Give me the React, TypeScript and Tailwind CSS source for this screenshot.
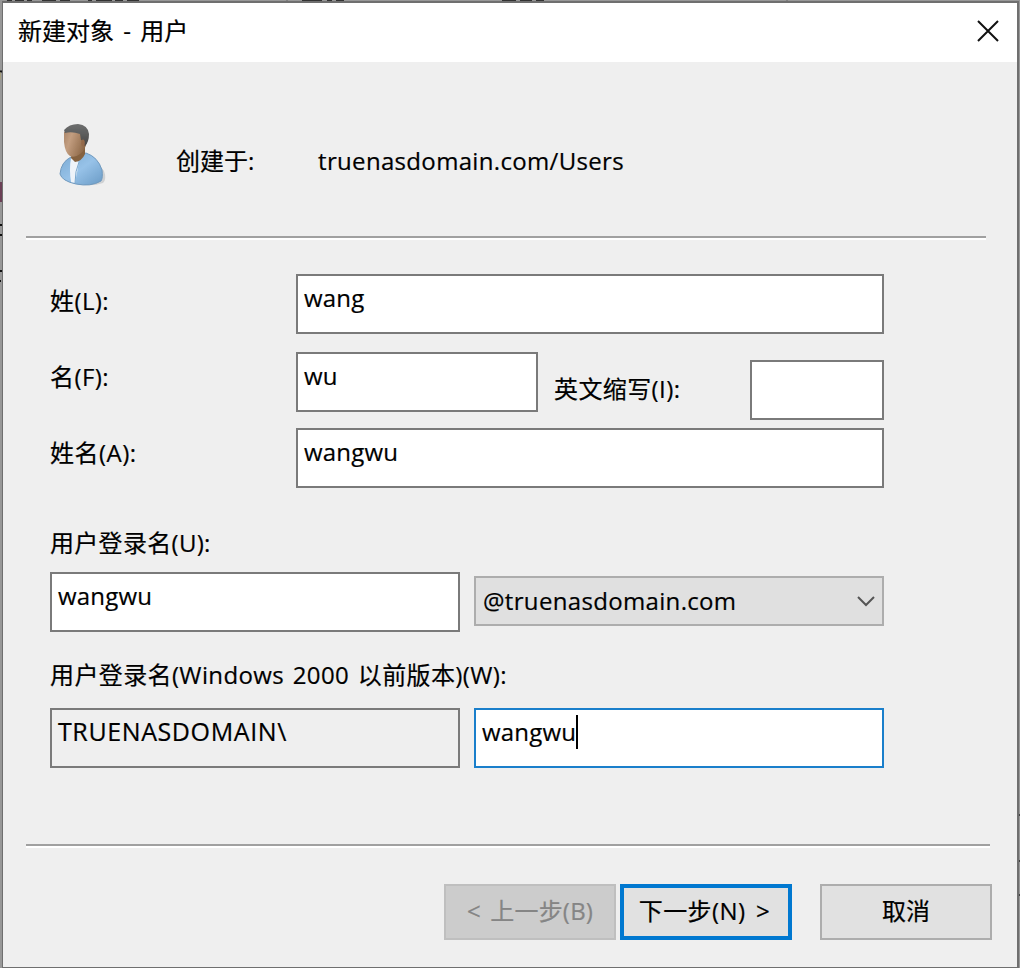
import type { ReactNode } from "react";

const FONT = "font-['Open_Sans','Noto_Sans_CJK_SC',sans-serif]";

function Label({ children, className = "" }: { children: ReactNode; className?: string }) {
  return <span className={`block whitespace-pre text-[24px] leading-[32px] ${className}`}>{children}</span>;
}

function Field({ children, className = "" }: { children?: ReactNode; className?: string }) {
  return (
    <div className={`flex h-[60px] shrink-0 items-start border-2 pl-[6px] pt-[6px] text-[24px] leading-[32px] ${className}`}>
      {children}
    </div>
  );
}

function Divider({ className = "" }: { className?: string }) {
  return <div className={`h-[4px] border-b-2 border-t-2 border-b-white border-t-[#a0a0a0] ${className}`} />;
}

function UserIcon() {
  return (
    <svg width="50" height="68" viewBox="0 0 50 68" className="block">
      <defs>
        <linearGradient id="face" x1="0" y1="0" x2="1" y2="0.4">
          <stop offset="0" stopColor="#a88468" />
          <stop offset="0.35" stopColor="#c39e80" />
          <stop offset="1" stopColor="#8d6848" />
        </linearGradient>
        <linearGradient id="coat" x1="0" y1="0" x2="1" y2="1">
          <stop offset="0" stopColor="#79a9d2" />
          <stop offset="0.5" stopColor="#97c2e8" />
          <stop offset="1" stopColor="#6a9bc6" />
        </linearGradient>
        <linearGradient id="hair" x1="0" y1="0" x2="0" y2="1">
          <stop offset="0" stopColor="#6d6e6e" />
          <stop offset="0.4" stopColor="#5f6060" />
          <stop offset="1" stopColor="#484644" />
        </linearGradient>
        <filter id="soft" x="-20%" y="-20%" width="140%" height="140%">
          <feGaussianBlur stdDeviation="0.7" />
        </filter>
      </defs>
      <g filter="url(#soft)">
        <path d="M9 61Q30 67 44 62Q48 58 45 50L39 42Z" fill="#cfd1d3" />
        <path d="M1 53Q2 41 12 36L27 32Q39 36 43 49Q44 57 42 60Q32 66 17 63Q3 60 1 53Z" fill="url(#coat)" stroke="#6f99be" strokeWidth="1" />
        <path d="M12 37L20 41L16 62L12 61Q10 48 12 37Z" fill="#eef3f9" />
        <path d="M20 41Q16 50 16 62" fill="none" stroke="#7aa8cf" strokeWidth="1" />
        <path d="M13 31L26 26V33Q23 40 16 41L12 37Z" fill="#85623f" />
        <path d="M5 11Q11 7 21 10L28 20Q26 30 21 33Q16 37 11 35Q6 32 5 21Z" fill="url(#face)" />
        <path d="M5 9Q10 3 19 3Q29 4 30 13Q30 21 26 25Q24 24 24 20L22 19L21 13Q13 10 6 12Z" fill="url(#hair)" />
        <ellipse cx="24" cy="22" rx="1.8" ry="3.5" fill="#94694a" />
      </g>
    </svg>
  );
}

function BackdropEdges() {
  return (
    <svg width="1020" height="968" className="pointer-events-none absolute left-0 top-0">
      <path
        d="M7 .5h5m3 0h9m3 0h5m10 0h14m4 0h10m18 0h4m4 0h16m3 0h8m4 0h12M302 .5h20m5 0h5m4 0h8M502 .5h14m4 0h12m4 0h8"
        stroke="#333"
        strokeWidth="1"
      />
      <path d="M287 0v1M787 0v1" stroke="#666" />
      <path d="M0 71.5h2M0 225h2M0 235h2M0 271h2M0 281h1" stroke="#111" strokeWidth="2" />
      <path d="M0 76h1" stroke="#a59d7c" strokeWidth="7" />
      <path d="M0 192h2" stroke="#6b4056" strokeWidth="20" />
      <path d="M1019 815h1M1019 861h1M1019 895h1" stroke="#444" strokeWidth="2" />
    </svg>
  );
}

export default function App() {
  return (
    <div className={`relative h-[968px] w-[1020px] overflow-hidden bg-[#989898] text-black [-webkit-text-stroke:0.2px] ${FONT}`}>
      <div className="flex h-[968px] flex-col pl-[2px] pr-px pt-px">
        <main className="flex flex-1 flex-col border-b border-l border-r-2 border-t-2 border-[#6f6f6f] bg-[#efefef]">
          <header className="flex h-[59px] items-start justify-between bg-white pl-[15px] pr-[17px]">
            <h1 className="mt-[12px] whitespace-pre text-[24px] leading-[32px] [word-spacing:3px]">新建对象 - 用户</h1>
            <svg width="24" height="24" viewBox="0 0 24 24" className="mt-[16px] block">
              <path d="M2 2L22 22M22 2L2 22" stroke="#111" strokeWidth="2" />
            </svg>
          </header>

          <section className="flex h-[174px] items-start">
            <div className="ml-[56px] mt-[59px] w-[50px]">
              <UserIcon />
            </div>
            <Label className="ml-[67px] mt-[83px] w-[142px]">创建于:</Label>
            <Label className="mt-[83px] tracking-[0.33px]">truenasdomain.com/Users</Label>
          </section>
          <Divider className="ml-[23px] w-[960px]" />

          <section className="ml-[47px] mt-[34px] flex h-[214px] w-[834px] flex-col">
            <div className="flex h-[78px]">
              <Label className="mt-[11px] w-[246px] tracking-[0.4px]">姓(L):</Label>
              <Field className="w-[588px] border-[#7a7a7a] bg-white tracking-[0.2px]">wang</Field>
            </div>
            <div className="flex h-[76px] items-start">
              <Label className="mt-[9px] w-[246px] tracking-[0.4px]">名(F):</Label>
              <Field className="w-[242px] border-[#7a7a7a] bg-white tracking-[0.2px]">wu</Field>
              <Label className="ml-[16px] mt-[21px] w-[196px] tracking-[0.4px]">英文缩写(I):</Label>
              <Field className="mt-[8px] w-[134px] border-[#7a7a7a] bg-white" />
            </div>
            <div className="flex h-[60px]">
              <Label className="mt-[9px] w-[246px] tracking-[0.5px]">姓名(A):</Label>
              <Field className="w-[588px] border-[#7a7a7a] bg-white tracking-[0.2px]">wangwu</Field>
            </div>
          </section>

          <section className="ml-[47px] mt-[39px] w-[834px]">
            <Label className="tracking-[0.3px]">用户登录名(U):</Label>
            <div className="mt-[13px] flex items-start gap-[14px]">
              <Field className="w-[410px] border-[#7a7a7a] bg-white tracking-[0.2px]">wangwu</Field>
              <div className="mt-[4px] flex h-[50px] w-[410px] items-center justify-between border-2 border-[#adadad] bg-[#e0e0e0] pl-[7px] pr-[7px]">
                <Label className="tracking-[0.33px]">@truenasdomain.com</Label>
                <svg width="18" height="12" viewBox="0 0 18 12" className="block">
                  <path d="M1 2L9 10L17 2" fill="none" stroke="#555" strokeWidth="2" />
                </svg>
              </div>
            </div>
          </section>

          <section className="ml-[47px] mt-[27px] w-[834px]">
            <Label className="tracking-[0.38px] [word-spacing:2px]">用户登录名(Windows 2000 以前版本)(W):</Label>
            <div className="mt-[17px] flex gap-[14px]">
              <Field className="w-[410px] border-[#7a7a7a] bg-[#efefef] text-[25px] tracking-[0.6px]">
                <span className="-mt-px">TRUENASDOMAIN\</span>
              </Field>
              <Field className="w-[410px] border-[#1a7fcb] bg-white tracking-[0.2px]">
                wangwu
                <i className="-mt-px block h-[34px] w-[2px] bg-black" />
              </Field>
            </div>
          </section>

          <Divider className="ml-[23px] mt-[76px] w-[964px]" />

          <footer className="ml-[441px] mt-[36px] flex h-[56px]">
            <button className="flex w-[172px] items-center justify-center border-2 border-[#bfbfbf] bg-[#cccccc] text-[#858585]">
              <Label className="-mt-[2px] tracking-[0.2px] [word-spacing:3px]">{"< 上一步(B)"}</Label>
            </button>
            <button className="ml-[4px] flex w-[172px] items-center justify-center border-4 border-[#0078d0] bg-[#e1e1e1]">
              <Label className="-ml-[3px] -mt-[2px] tracking-[0.4px] [word-spacing:4px]">{"下一步(N) >"}</Label>
            </button>
            <button className="ml-[28px] flex w-[172px] items-center justify-center border-2 border-[#adadad] bg-[#e1e1e1]">
              <Label className="-mt-[2px]">取消</Label>
            </button>
          </footer>
        </main>
      </div>
      <BackdropEdges />
    </div>
  );
}
